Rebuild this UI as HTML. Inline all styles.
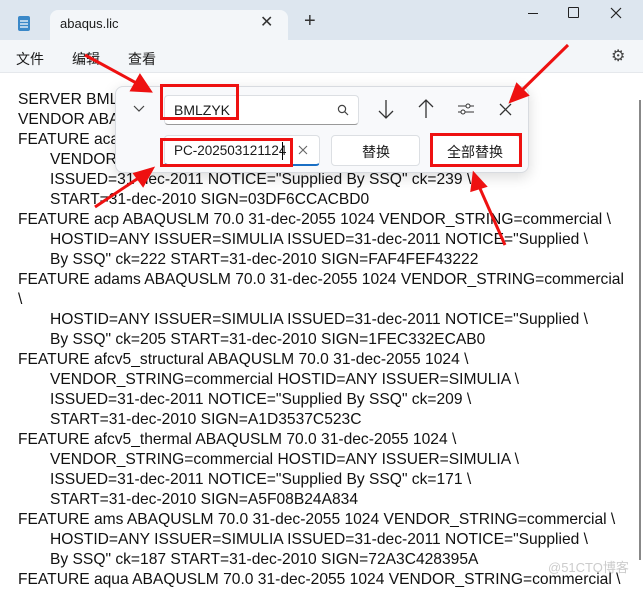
<!DOCTYPE html><html><head><meta charset="utf-8"><style>
*{margin:0;padding:0;box-sizing:border-box}
body{width:643px;height:583px;overflow:hidden;background:#fff;font-family:"Liberation Sans","Noto Sans CJK SC",sans-serif;position:relative}
.title{position:absolute;left:0;top:0;width:643px;height:40px;background:#dde6ef}
.tab{position:absolute;left:50px;top:10px;width:238px;height:30px;background:#f3f6f9;border-radius:8px 8px 0 0}
.menu{position:absolute;left:0;top:40px;width:643px;height:33px;background:#f3f6f9;border-bottom:1px solid #e5e8ec}
.t{position:absolute;font-size:14px;color:#1a1a1a}
.txt{position:absolute;left:18px;top:90px;font-size:15.6px;line-height:20px;color:#111;white-space:pre}
.i{padding-left:32px}
.dlg{position:absolute;left:115px;top:86px;width:414px;height:87px;background:#f8f9fb;border:1px solid #d8dbe0;border-radius:8px;box-shadow:0 4px 14px rgba(0,0,0,.15)}
.box{position:absolute;background:#fff;border:1px solid #dcdfe3;border-radius:4px}
.red{position:absolute;border:3px solid #ee1111}
</style></head><body>
<div class="title"></div>
<div class="tab"></div>
<svg style="position:absolute;left:17px;top:14px" width="14" height="18"><rect x="1" y="2" width="12" height="15" rx="2" fill="#3a88c8"/><path d="M3 7h8M3 10h8M3 13h8" stroke="#fff" stroke-width="1.2"/></svg>
<div class="t" style="left:60px;top:16px;font-size:13px">abaqus.lic</div>
<div class="t" style="left:260px;top:12px;font-size:16px;color:#333">✕</div>
<div class="t" style="left:304px;top:10px;font-size:20px;color:#333">+</div>
<div style="position:absolute;left:528px;top:13px;width:10px;height:1px;background:#222"></div>
<div style="position:absolute;left:568px;top:7px;width:11px;height:11px;border:1.3px solid #222;border-radius:1px"></div>
<svg style="position:absolute;left:610px;top:7px" width="12" height="12"><path d="M1 1L11 11M11 1L1 11" stroke="#222" stroke-width="1.2"/></svg>
<div class="menu"></div>
<div class="t" style="left:16px;top:49px">文件</div>
<div class="t" style="left:72px;top:49px">编辑</div>
<div class="t" style="left:128px;top:49px">查看</div>
<div class="t" style="left:611px;top:46px;font-size:16px;color:#444">⚙</div>
<div class="txt">SERVER BMLZYK
VENDOR ABAQUSLM
FEATURE acad
<span class="i">VENDOR_STRING</span>
<span class="i">ISSUED=31-dec-2011 NOTICE="Supplied By SSQ" ck=239 \</span>
<span class="i">START=31-dec-2010 SIGN=03DF6CCACBD0</span>
FEATURE acp ABAQUSLM 70.0 31-dec-2055 1024 VENDOR_STRING=commercial \
<span class="i">HOSTID=ANY ISSUER=SIMULIA ISSUED=31-dec-2011 NOTICE="Supplied \</span>
<span class="i">By SSQ" ck=222 START=31-dec-2010 SIGN=FAF4FEF43222</span>
FEATURE adams ABAQUSLM 70.0 31-dec-2055 1024 VENDOR_STRING=commercial
\
<span class="i">HOSTID=ANY ISSUER=SIMULIA ISSUED=31-dec-2011 NOTICE="Supplied \</span>
<span class="i">By SSQ" ck=205 START=31-dec-2010 SIGN=1FEC332ECAB0</span>
FEATURE afcv5_structural ABAQUSLM 70.0 31-dec-2055 1024 \
<span class="i">VENDOR_STRING=commercial HOSTID=ANY ISSUER=SIMULIA \</span>
<span class="i">ISSUED=31-dec-2011 NOTICE="Supplied By SSQ" ck=209 \</span>
<span class="i">START=31-dec-2010 SIGN=A1D3537C523C</span>
FEATURE afcv5_thermal ABAQUSLM 70.0 31-dec-2055 1024 \
<span class="i">VENDOR_STRING=commercial HOSTID=ANY ISSUER=SIMULIA \</span>
<span class="i">ISSUED=31-dec-2011 NOTICE="Supplied By SSQ" ck=171 \</span>
<span class="i">START=31-dec-2010 SIGN=A5F08B24A834</span>
FEATURE ams ABAQUSLM 70.0 31-dec-2055 1024 VENDOR_STRING=commercial \
<span class="i">HOSTID=ANY ISSUER=SIMULIA ISSUED=31-dec-2011 NOTICE="Supplied \</span>
<span class="i">By SSQ" ck=187 START=31-dec-2010 SIGN=72A3C428395A</span>
FEATURE aqua ABAQUSLM 70.0 31-dec-2055 1024 VENDOR_STRING=commercial \</div>
<div style="position:absolute;left:639px;top:100px;width:2px;height:460px;background:#888"></div>
<div class="t" style="left:548px;top:557px;font-size:13px;color:#ccc">@51CTO博客</div>
<div class="dlg"></div>
<svg style="position:absolute;left:133px;top:105px" width="12" height="8"><path d="M1 1L6 6L11 1" stroke="#444" fill="none" stroke-width="1.2"/></svg>
<div class="box" style="left:164px;top:95px;width:195px;height:30px;border-bottom:1px solid #999"></div>
<div class="t" style="left:174px;top:102px">BMLZYK</div>
<svg style="position:absolute;left:337px;top:104px" width="12" height="12"><circle cx="5" cy="5" r="3.6" stroke="#444" fill="none" stroke-width="1.2"/><path d="M7.6 7.6L11 11" stroke="#444" stroke-width="1.2"/></svg>
<svg style="position:absolute;left:377px;top:99px" width="18" height="20"><path d="M9 1V19M2 12L9 19L16 12" stroke="#333" fill="none" stroke-width="1.3"/></svg>
<svg style="position:absolute;left:417px;top:99px" width="18" height="20"><path d="M9 19V1M2 8L9 1L16 8" stroke="#333" fill="none" stroke-width="1.3"/></svg>
<svg style="position:absolute;left:457px;top:101px" width="18" height="16"><path d="M1 5h16M1 11h16" stroke="#333"/><circle cx="11" cy="5" r="2" fill="#fff" stroke="#333"/><circle cx="6" cy="11" r="2" fill="#fff" stroke="#333"/></svg>
<svg style="position:absolute;left:499px;top:103px" width="13" height="13"><path d="M1 1L12 12M12 1L1 12" stroke="#333" stroke-width="1.3"/></svg>
<div class="box" style="left:164px;top:135px;width:156px;height:31px;border-bottom:2px solid #1a6fc4"></div>
<div class="t" style="left:174px;top:143px;font-size:13.5px">PC-202503121124</div>
<div style="position:absolute;left:282px;top:142px;width:1px;height:18px;background:#000"></div>
<svg style="position:absolute;left:298px;top:145px" width="10" height="10"><path d="M1 1L9 9M9 1L1 9" stroke="#666" stroke-width="1.1"/></svg>
<div class="box" style="left:331px;top:135px;width:89px;height:31px"></div>
<div class="t" style="left:362px;top:142px">替换</div>
<div class="box" style="left:430px;top:135px;width:90px;height:31px"></div>
<div class="t" style="left:447px;top:142px">全部替换</div>
<div class="red" style="left:160px;top:84px;width:79px;height:36px"></div>
<div class="red" style="left:160px;top:138px;width:133px;height:29px"></div>
<div class="red" style="left:430px;top:133px;width:92px;height:34px"></div>
<svg style="position:absolute;left:0;top:0" width="643" height="583"><g stroke="#ee1111" stroke-width="3" fill="#ee1111">
<path d="M85 55L140 85"/><path d="M150 91L132 90L140 76Z"/>
<path d="M568 45L518 94"/><path d="M511 101L517 85L527 95Z"/>
<path d="M95 207L143 175"/><path d="M152 169L143 185L135 174Z"/>
<path d="M505 245L478 184"/><path d="M474 174L485 186L472 190Z"/>
</g></svg>
</body></html>
